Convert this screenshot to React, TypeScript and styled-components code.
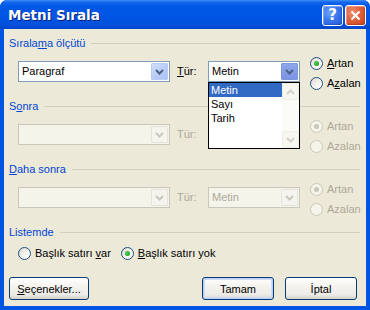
import React from 'react'
import styled, { createGlobalStyle, css } from 'styled-components'

const GlobalStyle = createGlobalStyle`
    html, body {
        margin: 0;
        padding: 0;
        background: #ffffff;
    }
    body {
        font-family: "Liberation Sans", Arial, sans-serif;
        font-size: 11px;
        color: #000000;
    }
`

const BLUE_LABEL = '#0046D5'
const DISABLED = '#ACA899'

const Window = styled.div`
    width: 370px;
    height: 310px;
    display: flex;
    flex-direction: column;
    border-radius: 7px 7px 0 0;
    overflow: hidden;
    background: #0054E3;
`

const TitleBar = styled.div`
    height: 29px;
    flex: none;
    display: flex;
    align-items: center;
    justify-content: space-between;
    padding: 0 4px 0 8px;
    background: linear-gradient(180deg, #3C8EF3 0%, #1466EB 8%, #0058E6 20%, #0055E5 55%, #0050DC 85%, #0046C8 100%);
`

const Title = styled.div`
    font-family: "DejaVu Sans", Verdana, sans-serif;
    font-weight: bold;
    font-size: 13.5px;
    color: #ffffff;
    text-shadow: 1px 1px 0 #0A1E6E;
`

const TitleButtons = styled.div`
    display: flex;
    gap: 2px;
    margin-top: 1px;
`

const CaptionButton = styled.div<{ $close?: boolean }>`
    width: 19px;
    height: 19px;
    border: 1px solid #ffffff;
    border-radius: 3px;
    display: flex;
    align-items: center;
    justify-content: center;
    color: #ffffff;
    font-family: "DejaVu Sans", Verdana, sans-serif;
    font-weight: bold;
    font-size: 15px;
    line-height: 1;
    box-shadow: inset 1px 1px 1px rgba(255, 255, 255, 0.35), inset -1px -1px 1px rgba(0, 0, 0, 0.15);
    background: ${p => p.$close
        ? 'radial-gradient(circle at 35% 35%, #F09274 0%, #E0613C 45%, #C8401C 100%)'
        : 'radial-gradient(circle at 35% 35%, #6FA2F9 0%, #3A78EE 45%, #2257D8 100%)'};
`

const Body = styled.div`
    flex: 1;
    background: #ECE9D8;
    margin: 0 4px 4px 4px;
    padding: 7px 6px 0 5px;
    display: flex;
    flex-direction: column;
`

const GroupHeader = styled.div`
    height: 14px;
    display: flex;
    align-items: center;
    gap: 6px;
    color: ${BLUE_LABEL};
`

const HeaderLine = styled.div`
    flex: 1;
    height: 0;
    border-top: 1px solid #D0D0BF;
    margin-top: 1px;
`

const Key = styled.span`
    text-decoration: underline;
    text-underline-offset: 1px;
`

const SortRow = styled.div`
    height: 46px;
    margin-top: 3px;
    display: flex;
    padding-left: 9px;
`

const Fields = styled.div`
    display: flex;
    align-items: flex-start;
    padding-top: 8px;
`

const TypeLabel = styled.div<{ $disabled?: boolean }>`
    width: 31px;
    height: 21px;
    line-height: 21px;
    padding-left: 7px;
    color: ${p => p.$disabled ? DISABLED : '#000'};
`

const ComboBox = styled.div<{ $width: number, $disabled?: boolean }>`
    position: relative;
    width: ${p => p.$width}px;
    height: 21px;
    box-sizing: border-box;
    border: 1px solid ${p => p.$disabled ? '#C9C7BA' : '#7F9DB9'};
    background: ${p => p.$disabled ? '#F5F4EA' : '#ffffff'};
    display: flex;
    align-items: stretch;
    color: ${p => p.$disabled ? DISABLED : '#000'};
`

const ComboText = styled.div`
    flex: 1;
    padding-left: 3px;
    line-height: 19px;
    white-space: nowrap;
    overflow: hidden;
`

const ArrowButton = styled.div<{ $disabled?: boolean, $pressed?: boolean }>`
    width: 17px;
    margin: 1px;
    box-sizing: border-box;
    border-radius: 1px;
    display: flex;
    align-items: center;
    justify-content: center;
    ${p => p.$disabled
        ? css`
            background: #F4F3EE;
            border: 1px solid #E6E4DA;
        `
        : p.$pressed
            ? css`
                background: linear-gradient(180deg, #8FA6EA 0%, #7C94E4 100%);
                border: 1px solid #7E95D8;
            `
            : css`
                background: linear-gradient(135deg, #D2DEFA 0%, #B6CAF6 60%, #AEC3F3 100%);
                border: 1px solid #BACBF2;
            `}
`

const Chevron: React.FC<{ color: string, up?: boolean }> = ({ color, up }) => (
    <svg width="9" height="6" viewBox="0 0 9 6">
        <path
            d={up ? 'M1 5 L4.5 1.5 L8 5' : 'M1 1 L4.5 4.5 L8 1'}
            fill="none"
            stroke={color}
            strokeWidth="2"
        />
    </svg>
)

const ListBox = styled.div`
    position: absolute;
    left: -1px;
    top: 20px;
    width: 92px;
    height: 67px;
    box-sizing: border-box;
    border: 1px solid #000000;
    background: #ffffff;
    display: flex;
    z-index: 2;
`

const ListItems = styled.div`
    flex: 1;
    display: flex;
    flex-direction: column;
`

const ListItem = styled.div<{ $selected?: boolean }>`
    height: 14px;
    line-height: 14px;
    padding-left: 2px;
    color: ${p => p.$selected ? '#ffffff' : '#000000'};
    background: ${p => p.$selected ? '#316AC5' : 'transparent'};
`

const ScrollBar = styled.div`
    width: 17px;
    display: flex;
    flex-direction: column;
    justify-content: space-between;
    background: #FBFBF8;
`

const ScrollButton = styled.div`
    height: 17px;
    box-sizing: border-box;
    border: 1px solid #EEEDE5;
    border-radius: 2px;
    background: #F7F6F1;
    display: flex;
    align-items: center;
    justify-content: center;
`

const RadioColumn = styled.div`
    display: flex;
    flex-direction: column;
    margin-left: 10px;
`

const RadioItem = styled.div<{ $disabled?: boolean }>`
    height: 20px;
    display: flex;
    align-items: center;
    gap: 4px;
    color: ${p => p.$disabled ? DISABLED : '#000'};
`

const RadioCircle = styled.div<{ $checked?: boolean, $disabled?: boolean }>`
    width: 13px;
    height: 13px;
    box-sizing: border-box;
    border-radius: 50%;
    border: 1px solid ${p => p.$disabled ? '#CAC8BB' : '#1C5180'};
    background: ${p => p.$disabled
        ? '#F5F4EA'
        : 'linear-gradient(135deg, #DCD9CF 0%, #F3F2EC 50%, #FFFFFF 100%)'};
    display: flex;
    align-items: center;
    justify-content: center;
    &::after {
        content: '';
        display: ${p => p.$checked ? 'block' : 'none'};
        width: 5px;
        height: 5px;
        border-radius: 50%;
        background: ${p => p.$disabled ? '#CAC8BB' : 'radial-gradient(circle at 40% 40%, #55D455 0%, #21A121 70%)'};
    }
`

const OptionRow = styled.div`
    height: 16px;
    margin-top: 6px;
    padding-left: 9px;
    display: flex;
    align-items: center;
    gap: 10px;
`

const ButtonRow = styled.div`
    margin-top: 16px;
    display: flex;
    align-items: center;
    gap: 11px;
    padding-right: 3px;
`

const Spacer = styled.div`
    flex: 1;
`

const PushButton = styled.div<{ $width: number, $default?: boolean }>`
    width: ${p => p.$width}px;
    height: 23px;
    box-sizing: border-box;
    border: 1px solid #003C74;
    border-radius: 3px;
    background: linear-gradient(180deg, #FFFFFF 0%, #F4F3EE 40%, #ECEBE5 80%, #D6D0C5 100%);
    display: flex;
    align-items: center;
    justify-content: center;
    ${p => p.$default && css`
        box-shadow: inset 0 0 0 1px #BCD0F6, inset 0 0 0 2px #CEDCF8;
    `}
`

interface SortGroupProps {
    label: React.ReactNode,
    field?: string,
    type: string,
    disabled?: boolean,
    open?: boolean
}

const SortGroup: React.FC<SortGroupProps> = ({ label, field, type, disabled, open }) => (
    <>
        <GroupHeader>
            <span>{label}</span>
            <HeaderLine />
        </GroupHeader>
        <SortRow>
            <Fields>
                <ComboBox $width={152} $disabled={disabled}>
                    <ComboText>{field}</ComboText>
                    <ArrowButton $disabled={disabled}>
                        <Chevron color={disabled ? '#C9C7BA' : '#4D6185'} />
                    </ArrowButton>
                </ComboBox>
                <TypeLabel $disabled={disabled}>
                    {disabled ? 'Tür:' : <><Key>T</Key>ür:</>}
                </TypeLabel>
                <ComboBox $width={92} $disabled={disabled}>
                    <ComboText>{type}</ComboText>
                    <ArrowButton $disabled={disabled} $pressed={open}>
                        <Chevron color={disabled ? '#C9C7BA' : '#4D6185'} />
                    </ArrowButton>
                    {open && (
                        <ListBox>
                            <ListItems>
                                <ListItem $selected>Metin</ListItem>
                                <ListItem>Sayı</ListItem>
                                <ListItem>Tarih</ListItem>
                            </ListItems>
                            <ScrollBar>
                                <ScrollButton><Chevron color="#D3D1C6" up /></ScrollButton>
                                <ScrollButton><Chevron color="#D3D1C6" /></ScrollButton>
                            </ScrollBar>
                        </ListBox>
                    )}
                </ComboBox>
            </Fields>
            <RadioColumn>
                <RadioItem $disabled={disabled}>
                    <RadioCircle $checked $disabled={disabled} />
                    <span>{disabled ? 'Artan' : <><Key>A</Key>rtan</>}</span>
                </RadioItem>
                <RadioItem $disabled={disabled}>
                    <RadioCircle $disabled={disabled} />
                    <span>{disabled ? 'Azalan' : <>A<Key>z</Key>alan</>}</span>
                </RadioItem>
            </RadioColumn>
        </SortRow>
    </>
)

export default function App() {
    return (
        <>
            <GlobalStyle />
            <Window>
                <TitleBar>
                    <Title>Metni Sırala</Title>
                    <TitleButtons>
                        <CaptionButton>?</CaptionButton>
                        <CaptionButton $close>
                            <svg width="11" height="11" viewBox="0 0 11 11">
                                <path d="M1.5 1.5 L9.5 9.5 M9.5 1.5 L1.5 9.5" stroke="#ffffff" strokeWidth="2" />
                            </svg>
                        </CaptionButton>
                    </TitleButtons>
                </TitleBar>
                <Body>
                    <SortGroup
                        label={<>Sırala<Key>m</Key>a ölçütü</>}
                        field="Paragraf"
                        type="Metin"
                        open
                    />
                    <SortGroup label={<>S<Key>o</Key>nra</>} type="" disabled />
                    <SortGroup label={<><Key>D</Key>aha sonra</>} type="Metin" disabled />
                    <GroupHeader>
                        <span>Listemde</span>
                        <HeaderLine />
                    </GroupHeader>
                    <OptionRow>
                        <RadioItem>
                            <RadioCircle />
                            <span>Başlık satırı <Key>v</Key>ar</span>
                        </RadioItem>
                        <RadioItem>
                            <RadioCircle $checked />
                            <span><Key>B</Key>aşlık satırı yok</span>
                        </RadioItem>
                    </OptionRow>
                    <ButtonRow>
                        <PushButton $width={80}><span><Key>S</Key>eçenekler...</span></PushButton>
                        <Spacer />
                        <PushButton $width={72} $default>Tamam</PushButton>
                        <PushButton $width={72}>İptal</PushButton>
                    </ButtonRow>
                </Body>
            </Window>
        </>
    )
}
